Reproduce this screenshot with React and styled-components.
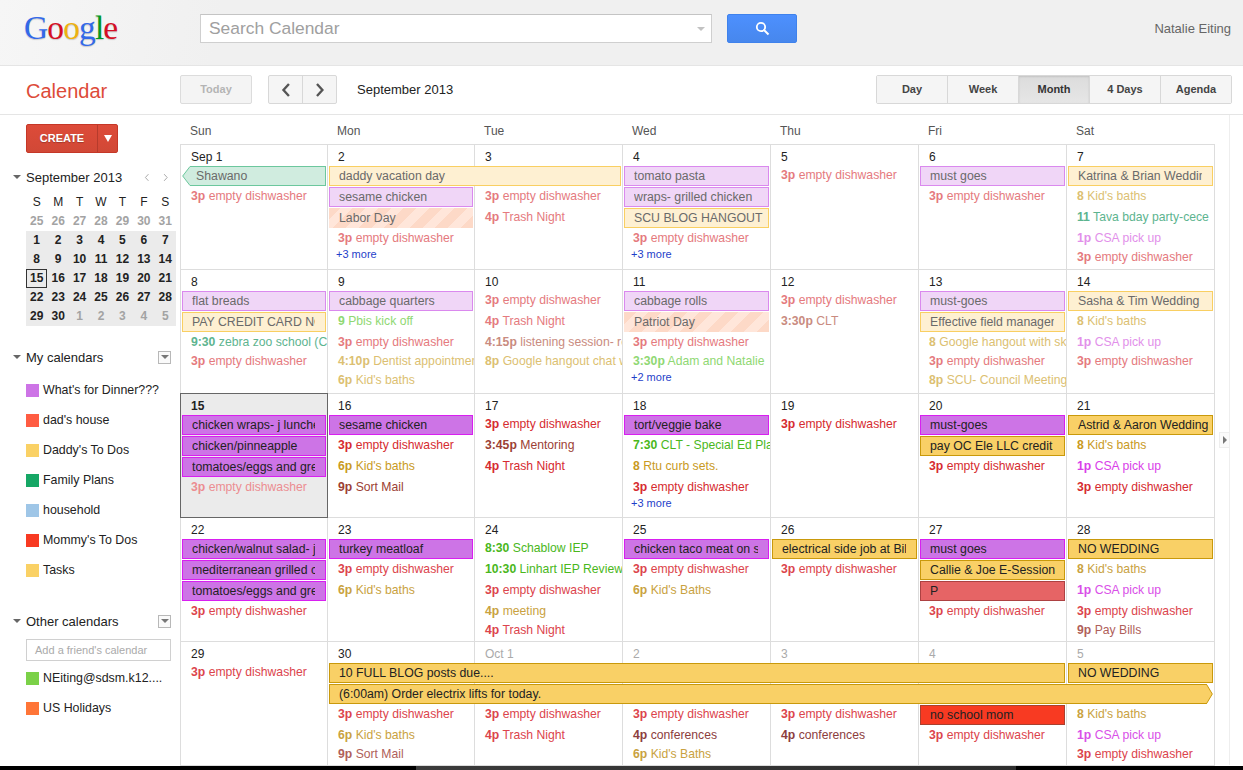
import React from 'react';
import styled, { createGlobalStyle, css } from 'styled-components';

const Global = createGlobalStyle`
  html, body { margin: 0; padding: 0; height: 770px; overflow: hidden; background: #fff; }
  body { font-family: "Liberation Sans", Arial, sans-serif; color: #222; }
  * { box-sizing: border-box; }
`;

const COLS = '147px 147px 148px 148px 148px 148px 148px';

const Page = styled.div`display: flex; flex-direction: column; width: 1243px; height: 770px; overflow: hidden;`;

const Header = styled.header`
  display: flex; align-items: flex-start; height: 66px; padding: 14px 12px 0 24px;
  background: linear-gradient(100deg, #f6f6f6 0, #f0f0f0 220px); border-bottom: 1px solid #e5e5e5; flex: none;
`;
const Logo = styled.div`
  width: 176px; margin-top: -5px; font-family: "Liberation Serif", serif; font-size: 33.5px; line-height: 38px; letter-spacing: -0.9px;
  text-shadow: 0 1px 1px rgba(0,0,0,.18);
`;
const L = styled.span`color: ${p => p.$c};`;
const SearchBox = styled.div`
  display: flex; align-items: center; justify-content: space-between; width: 512px; height: 29px; padding: 0 6px 0 8px;
  background: #fff; border: 1px solid #cfcfcf; border-top-color: #c4c4c4;
`;
const Placeholder = styled.span`font-size: 17.4px; color: #a0a0a0;`;
const Caret = styled.i`
  display: block; width: 0; height: 0; border-left: 4px solid transparent; border-right: 4px solid transparent;
  border-top: ${p => p.$h || 4}px solid ${p => p.$c || '#c2c2c2'};
`;
const SearchButton = styled.div`
  display: flex; align-items: center; justify-content: center; width: 70px; height: 29px; margin-left: 15px;
  background: linear-gradient(#4d90fe, #4787ed); border: 1px solid #3f82ec; border-radius: 2px;
`;
const UserName = styled.div`margin-left: auto; margin-top: 7px; font-size: 13px; color: #666;`;

const Toolbar = styled.div`
  display: flex; align-items: flex-start; height: 49px; padding-top: 9px; border-bottom: 1px solid #e5e5e5; flex: none;
`;
const AppTitle = styled.div`width: 180px; padding: 3px 0 0 26px; font-size: 20px; line-height: 26px; color: #dd4b39;`;
const TodayButton = styled.div`
  display: flex; align-items: center; justify-content: center; width: 72px; height: 29px; margin-right: 16px; padding-bottom: 2px;
  font-size: 11px; font-weight: bold; color: #b4b4b4; background: #f4f4f4; border: 1px solid #dcdcdc; border-radius: 2px;
`;
const NavGroup = styled.div`display: flex; width: 69px; height: 29px; border: 1px solid #d8d8d8; border-radius: 2px; background: #f5f5f5;`;
const NavButton = styled.div`
  flex: 1; display: flex; align-items: center; justify-content: center;
  & + & { border-left: 1px solid #d8d8d8; }
`;
const MonthLabel = styled.div`margin-left: 20px; font-size: 13px; line-height: 29px; color: #222;`;
const Tabs = styled.div`display: flex; width: 356px; height: 29px; margin-left: auto; margin-right: 11px; border: 1px solid #d8d8d8; border-radius: 2px;`;
const Tab = styled.div`
  flex: 1; display: flex; align-items: center; justify-content: center; padding-bottom: 2px; font-size: 11px; font-weight: bold; color: #444;
  background: #f5f5f5;
  & + & { border-left: 1px solid #d8d8d8; }
  ${p => p.$active && css`
    background: linear-gradient(#dcdcdc, #e6e6e6); color: #333; box-shadow: inset 0 1px 2px rgba(0,0,0,.12);
  `}
`;

const Body = styled.div`display: flex; flex: 1; min-height: 0;`;

const Sidebar = styled.aside`width: 180px; flex: none; padding: 9px 9px 0 0;`;
const CreateButton = styled.div`
  display: flex; width: 92px; height: 29px; margin-left: 26px; border: 1px solid #c53727; border-radius: 2px;
  background: linear-gradient(#dd4b39, #d14836); color: #fff; font-size: 11px; font-weight: bold;
`;
const CreateLabel = styled.span`flex: 1; text-align: center; line-height: 27px; text-shadow: 0 1px 1px rgba(0,0,0,.25);`;
const CreateCaret = styled.span`
  display: flex; align-items: center; justify-content: center; width: 20px; border-left: 1px solid #b63b2c;
`;
const SectionHead = styled.div`
  display: flex; align-items: center; height: 18px; margin-top: ${p => p.$top}px; font-size: 13px; color: #222;
`;
const Twisty = styled.span`display: flex; width: 26px; justify-content: flex-start; padding-left: 13px;`;
const Spacer = styled.span`flex: 1;`;
const Chevrons = styled.span`display: flex; gap: 14px; margin-right: 2px;`;
const MenuBox = styled.span`
  display: flex; align-items: center; justify-content: center; width: 13px; height: 13px; background: #fafafa; border: 1px solid #b8b8b8;
`;
const MiniGrid = styled.div`
  display: grid; grid-template-columns: repeat(7, 1fr); grid-auto-rows: 19px; width: 150px; margin: 7px 0 0 26px;
`;
const MiniCell = styled.div`
  text-align: center; font-size: 12px; line-height: 18px;
  font-weight: ${p => (p.$head ? 'normal' : 'bold')};
  color: ${p => (p.$dim ? '#a3a3a3' : '#222')};
  background: ${p => (p.$shaded ? '#ebebeb' : 'transparent')};
  ${p => p.$selected && css`border: 1px solid #333; line-height: 17px;`}
`;
const CalList = styled.ul`list-style: none; margin: ${p => p.$top}px 0 0; padding: 0 0 0 26px;`;
const CalItem = styled.li`display: flex; align-items: center; height: 30px; font-size: 12.4px; color: #222; white-space: nowrap;`;
const Swatch = styled.span`width: 13px; height: 13px; margin-right: 4px; flex: none; background: ${p => p.$c};`;
const FriendInput = styled.div`
  height: 22px; margin: 9px 0 0 26px; padding-left: 8px; font-size: 11px; line-height: 20px; color: #aaa;
  border: 1px solid #d0d0d0; background: #fff;
`;

const CalendarArea = styled.main`width: 1035px; flex: none;`;
const DayHead = styled.div`display: grid; grid-template-columns: ${COLS}; height: 29px;`;
const DayName = styled.div`padding: 9px 0 0 10px; font-size: 12px; line-height: 14px; color: #555;`;
const Weeks = styled.div`border-right: 1px solid #ddd; border-bottom: 1px solid #ddd;`;
const Week = styled.div`
  display: grid; grid-template-columns: ${COLS}; grid-template-rows: ${p => p.$rows}; height: ${p => p.$h}px;
`;
const DayCell = styled.div`
  grid-column: ${p => p.$col + 1}; grid-row: 1 / -1; padding: 5px 0 0 10px;
  border-left: 1px solid #ddd; border-top: 1px solid #ddd;
  ${p => p.$today && css`
    position: relative; z-index: 1; background: #ebebeb; border: 1px solid #666; margin: 0 -1px -1px 0;
  `}
`;
const DateNum = styled.div`
  font-size: 12px; line-height: 14px; font-weight: ${p => (p.$today ? 'bold' : 'normal')}; color: ${p => (p.$muted ? '#aaa' : '#222')};
`;
const chipSkins = {
  dinner: { bg: '#cd74e6', bd: '#d81ff0', fbg: '#f0d6f7', fbd: '#da89ee' },
  orange: { bg: '#f9d066', bd: '#c9990b', fbg: '#fef0d2', fbd: '#f9cf62' },
  mint: { bg: '#d0ecdf', bd: '#6cc79d', fbg: '#d0ecdf', fbd: '#6cc79d' },
  red: { bg: '#e66465', bd: '#ad4142', fbg: '#e66465', fbd: '#ad4142' },
  fire: { bg: '#f83a22', bd: '#a9402f', fbg: '#f83a22', fbd: '#a9402f' },
};
const Chip = styled.div`
  position: relative; z-index: 2; grid-column: ${p => p.$col + 1} / span ${p => p.$span};
  grid-row: ${p => p.$lane + 2}; height: 20px; margin: 0 1px 0 2px; padding: 0 ${p => (p.$fit ? 4 : 10)}px 0 9px; min-width: 0;
  font-size: 12.3px; line-height: 18px; color: ${p => (p.$faded ? '#6a6a6a' : '#222')};
  background: ${p => chipSkins[p.$kind]?.[p.$faded ? 'fbg' : 'bg']};
  border: 1px solid ${p => chipSkins[p.$kind]?.[p.$faded ? 'fbd' : 'bd']};
  ${p => p.$kind === 'holiday' && css`
    border: none; line-height: 20px; padding-left: 10px;
    background: repeating-linear-gradient(-45deg, #fdd9c7 0 9px, #ffe6da 9px 18px);
  `}
  ${p => p.$left && css`margin-left: 10px; border-left: none; padding-left: 6px;`}
  ${p => p.$right && css`margin-right: 7px; border-right: none;`}
`;
const ChipText = styled.span`display: block; overflow: hidden; white-space: nowrap;`;
const ChipTip = styled.svg`
  position: absolute; top: -1px; width: 8px; height: 20px; display: block;
  ${p => (p.$side === 'left' ? 'left: -8px;' : 'right: -7px;')}
`;
const EventRow = styled.div`
  position: relative; z-index: 2; grid-column: ${p => p.$col + 1}; grid-row: ${p => p.$lane + 2}; min-width: 0;
  padding-left: 11px; overflow: hidden; white-space: nowrap; font-size: 12.2px; line-height: 19px; height: 19px;
  color: ${p => p.$c};
`;
const MoreLink = styled.div`
  position: relative; z-index: 2; grid-column: ${p => p.$col + 1}; grid-row: ${p => p.$lane + 2};
  padding-left: 9px; font-size: 11px; line-height: 12px; color: #1f3fc9;
`;
const Gutter = styled.div`
  display: flex; flex-direction: column; align-items: flex-end; width: 15px; padding-top: 317px; border-right: 1px solid #eee;
  height: 650px;
`;
const ExpandTab = styled.div`
  display: flex; align-items: center; justify-content: center; width: 10px; height: 16px; background: #fafafa;
  border: 1px solid #eee; border-right: none;
`;
const ExpandCaret = styled.i`
  display: block; width: 0; height: 0; border-top: 4px solid transparent; border-bottom: 4px solid transparent; border-left: 4px solid #777;
`;
const Footer = styled.div`
  height: 4px; flex: none; background: linear-gradient(90deg, #000 0 416px, #3b3b3b 416px, #2e2e2e 1016px, #000 1016px);
`;

const tones = {
  red: { past: '#e57a7e', now: '#d62b30', soon: '#dc444c', today: '#ec8d91' },
  gold: { past: '#dcbf72', now: '#c99a1e', soon: '#c9a23f' },
  brown: { past: '#c98b80', now: '#9c3f35', soon: '#b05f5b' },
  dark: { soon: '#8c3d3d' },
  green: { past: '#8fd873', now: '#4ab71c', soon: '#4ab71c' },
  teal: { past: '#5db48f' },
  pink: { past: '#e290ea', now: '#d93ee9', soon: '#d94fe8' },
};
const chip = (col, lane, kind, title, o = {}) => ({ type: 'chip', col, lane, kind, title, span: 1, ...o });
const ev = (col, lane, tone, time, title) => ({ type: 'ev', col, lane, tone, time, title });
const more = (col, lane, title) => ({ type: 'more', col, lane, title });
const dish = (col, lane) => ev(col, lane, 'red', '3p', 'empty dishwasher');
const baths = (col, lane, day = "Kid's baths", time = '6p') => ev(col, lane, 'gold', time, day);
const csa = (col, lane) => ev(col, lane, 'pink', '1p', 'CSA pick up');
const trash = (col, lane) => ev(col, lane, 'red', '4p', 'Trash Night');

const R3 = '22px 21px 21px 21px 19px 19px 1fr';
const R2 = '22px 21px 21px 19px 19px 19px 1fr';

const weeks = [
  {
    h: 125, rows: R3, tone: 'past', faded: true,
    dates: ['Sep 1', '2', '3', '4', '5', '6', '7'],
    items: [
      chip(0, 0, 'mint', 'Shawano', { left: true }), dish(0, 1),
      chip(1, 0, 'orange', 'daddy vacation day', { span: 2 }), chip(1, 1, 'dinner', 'sesame chicken'),
      chip(1, 2, 'holiday', 'Labor Day'), dish(1, 3), more(1, 4, '+3 more'),
      dish(2, 1), trash(2, 2),
      chip(3, 0, 'dinner', 'tomato pasta'), chip(3, 1, 'dinner', 'wraps- grilled chicken'),
      chip(3, 2, 'orange', 'SCU BLOG HANGOUT', { fit: true }), dish(3, 3), more(3, 4, '+3 more'),
      dish(4, 0),
      chip(5, 0, 'dinner', 'must goes'), dish(5, 1),
      chip(6, 0, 'orange', 'Katrina & Brian Wedding'), baths(6, 1, "Kid's baths", '8'),
      ev(6, 2, 'teal', '11', 'Tava bday party-cece'), csa(6, 3), dish(6, 4),
    ],
  },
  {
    h: 124, rows: R2, tone: 'past', faded: true,
    dates: ['8', '9', '10', '11', '12', '13', '14'],
    items: [
      chip(0, 0, 'dinner', 'flat breads'), chip(0, 1, 'orange', 'PAY CREDIT CARD NOW'),
      ev(0, 2, 'teal', '9:30', 'zebra zoo school (CLT)'), dish(0, 3),
      chip(1, 0, 'dinner', 'cabbage quarters'), ev(1, 1, 'green', '9', 'Pbis kick off'), dish(1, 2),
      baths(1, 3, 'Dentist appointment', '4:10p'), baths(1, 4),
      dish(2, 0), trash(2, 1), ev(2, 2, 'brown', '4:15p', 'listening session- room'),
      baths(2, 3, 'Google hangout chat with', '8p'),
      chip(3, 0, 'dinner', 'cabbage rolls'), chip(3, 1, 'holiday', 'Patriot Day'), dish(3, 2),
      ev(3, 3, 'green', '3:30p', 'Adam and Natalie'), more(3, 4, '+2 more'),
      dish(4, 0), ev(4, 1, 'brown', '3:30p', 'CLT'),
      chip(5, 0, 'dinner', 'must-goes'), chip(5, 1, 'orange', 'Effective field management'),
      baths(5, 2, 'Google hangout with sk', '8'), dish(5, 3), baths(5, 4, 'SCU- Council Meeting', '8p'),
      chip(6, 0, 'orange', 'Sasha & Tim Wedding', { fit: true }), baths(6, 1, "Kid's baths", '8'), csa(6, 2), dish(6, 3),
    ],
  },
  {
    h: 124, rows: R3, tone: 'now', today: 0,
    dates: ['15', '16', '17', '18', '19', '20', '21'],
    items: [
      chip(0, 0, 'dinner', 'chicken wraps- j lunches'), chip(0, 1, 'dinner', 'chicken/pinneapple'),
      chip(0, 2, 'dinner', 'tomatoes/eggs and greens'), { ...dish(0, 3), forced: 'today' },
      chip(1, 0, 'dinner', 'sesame chicken'), dish(1, 1), baths(1, 2), ev(1, 3, 'brown', '9p', 'Sort Mail'),
      dish(2, 0), ev(2, 1, 'brown', '3:45p', 'Mentoring'), trash(2, 2),
      chip(3, 0, 'dinner', 'tort/veggie bake'), ev(3, 1, 'green', '7:30', 'CLT - Special Ed Plan'),
      baths(3, 2, 'Rtu curb sets.', '8'), dish(3, 3), more(3, 4, '+3 more'),
      dish(4, 0),
      chip(5, 0, 'dinner', 'must-goes'), chip(5, 1, 'orange', 'pay OC Ele LLC credit card'), dish(5, 2),
      chip(6, 0, 'orange', 'Astrid & Aaron Wedding', { fit: true }), baths(6, 1, "Kid's baths", '8'), csa(6, 2), dish(6, 3),
    ],
  },
  {
    h: 124, rows: R3, tone: 'soon',
    dates: ['22', '23', '24', '25', '26', '27', '28'],
    items: [
      chip(0, 0, 'dinner', 'chicken/walnut salad- j lunch'), chip(0, 1, 'dinner', 'mediterranean grilled chicken'),
      chip(0, 2, 'dinner', 'tomatoes/eggs and greens'), dish(0, 3),
      chip(1, 0, 'dinner', 'turkey meatloaf'), dish(1, 1), baths(1, 2),
      ev(2, 0, 'green', '8:30', 'Schablow IEP'), ev(2, 1, 'green', '10:30', 'Linhart IEP Review'), dish(2, 2),
      baths(2, 3, 'meeting', '4p'), trash(2, 4),
      chip(3, 0, 'dinner', 'chicken taco meat on salad'), dish(3, 1), baths(3, 2, "Kid's Baths"),
      chip(4, 0, 'orange', "electrical side job at Bill's"), dish(4, 1),
      chip(5, 0, 'dinner', 'must goes'), chip(5, 1, 'orange', 'Callie & Joe E-Session', { fit: true }), chip(5, 2, 'red', 'P'), dish(5, 3),
      chip(6, 0, 'orange', 'NO WEDDING'), baths(6, 1, "Kid's baths", '8'), csa(6, 2), dish(6, 3),
      ev(6, 4, 'brown', '9p', 'Pay Bills'),
    ],
  },
  {
    h: 124, rows: R3, tone: 'soon', muted: [2, 3, 4, 5, 6],
    dates: ['29', '30', 'Oct 1', '2', '3', '4', '5'],
    items: [
      dish(0, 0),
      chip(1, 0, 'orange', '10 FULL BLOG posts due....', { span: 5 }),
      chip(1, 1, 'orange', '(6:00am) Order electrix lifts for today.', { span: 6, right: true }),
      dish(1, 2), baths(1, 3), ev(1, 4, 'brown', '9p', 'Sort Mail'),
      dish(2, 2), trash(2, 3),
      dish(3, 2), ev(3, 3, 'dark', '4p', 'conferences'), baths(3, 4, "Kid's Baths"),
      dish(4, 2), ev(4, 3, 'dark', '4p', 'conferences'),
      chip(5, 2, 'fire', 'no school mom'), dish(5, 3),
      chip(6, 0, 'orange', 'NO WEDDING'), baths(6, 2, "Kid's baths", '8'), csa(6, 3), dish(6, 4),
    ],
  },
];

const miniRows = [
  [25, 26, 27, 28, 29, 30, 31], [1, 2, 3, 4, 5, 6, 7], [8, 9, 10, 11, 12, 13, 14], [15, 16, 17, 18, 19, 20, 21],
  [22, 23, 24, 25, 26, 27, 28], [29, 30, 1, 2, 3, 4, 5],
];
const myCals = [
  ["What's for Dinner???", '#cd74e6'], ["dad's house", '#ff5c42'], ["Daddy's To Dos", '#fad165'], ['Family Plans', '#16a765'],
  ['household', '#9fc6e7'], ["Mommy's To Dos", '#f83a22'], ['Tasks', '#fad165'],
];
const otherCals = [['NEiting@sdsm.k12....', '#7bd148'], ['US Holidays', '#ff7537']];

const Chevron = ({ dir, size = 16, w = 2.4, c = '#555' }) => (
  <svg width={size * 0.62} height={size} viewBox="0 0 10 16" fill="none">
    <path d={dir === 'left' ? 'M8 2 L2.5 8 L8 14' : 'M2 2 L7.5 8 L2 14'} stroke={c} strokeWidth={w} />
  </svg>
);

const Tip = ({ side, kind }) => {
  const skin = chipSkins[kind];
  const faded = side === 'left';
  const bg = faded ? skin.fbg : skin.bg;
  const bd = faded ? skin.fbd : skin.bd;
  const points = side === 'left' ? '8,0.5 0.7,10 8,19.5' : '0,0.5 0.6,0.5 6.3,10 0.6,19.5 0,19.5';
  return (
    <ChipTip $side={side} viewBox="0 0 8 20">
      <polygon points={points} fill={bg} />
      <polyline points={points} fill="none" stroke={bd} />
    </ChipTip>
  );
};

const SectionTitle = ({ top, children, extra }) => (
  <SectionHead $top={top}>
    <Twisty><Caret $c="#666" /></Twisty>
    {children}
    <Spacer />
    {extra}
  </SectionHead>
);

const Menu = () => <MenuBox><Caret $c="#777" $h={4} /></MenuBox>;

export default function App() {
  return (
    <Page>
      <Global />
      <Header>
        <Logo>
          <L $c="#3369e8">G</L><L $c="#d50f25">o</L><L $c="#eeb211">o</L><L $c="#3369e8">g</L><L $c="#009925">l</L><L $c="#d50f25">e</L>
        </Logo>
        <SearchBox>
          <Placeholder>Search Calendar</Placeholder>
          <Caret />
        </SearchBox>
        <SearchButton>
          <svg width="15" height="15" viewBox="0 0 15 15" fill="none">
            <circle cx="6" cy="6" r="4.2" stroke="#fff" strokeWidth="1.8" />
            <path d="M9 9 L13.5 13.5" stroke="#fff" strokeWidth="2" />
          </svg>
        </SearchButton>
        <UserName>Natalie Eiting</UserName>
      </Header>
      <Toolbar>
        <AppTitle>Calendar</AppTitle>
        <TodayButton>Today</TodayButton>
        <NavGroup>
          <NavButton><Chevron dir="left" /></NavButton>
          <NavButton><Chevron dir="right" /></NavButton>
        </NavGroup>
        <MonthLabel>September 2013</MonthLabel>
        <Tabs>
          {['Day', 'Week', 'Month', '4 Days', 'Agenda'].map(t => <Tab key={t} $active={t === 'Month'}>{t}</Tab>)}
        </Tabs>
      </Toolbar>
      <Body>
        <Sidebar>
          <CreateButton>
            <CreateLabel>CREATE</CreateLabel>
            <CreateCaret><Caret $c="#fff" $h={7} /></CreateCaret>
          </CreateButton>
          <SectionTitle
            top={15}
            extra={<Chevrons><Chevron dir="left" size={9} w={1.5} c="#999" /><Chevron dir="right" size={9} w={1.5} c="#999" /></Chevrons>}
          >
            September 2013
          </SectionTitle>
          <MiniGrid>
            {['S', 'M', 'T', 'W', 'T', 'F', 'S'].map((d, i) => <MiniCell key={i} $head>{d}</MiniCell>)}
            {miniRows.map((row, r) => row.map((n, c) => (
              <MiniCell
                key={`${r}-${c}`}
                $shaded={r > 0}
                $dim={r === 0 || (r === 5 && c > 1)}
                $selected={r === 3 && c === 0}
              >
                {n}
              </MiniCell>
            )))}
          </MiniGrid>
          <SectionTitle top={22} extra={<Menu />}>My calendars</SectionTitle>
          <CalList $top={9}>
            {myCals.map(([name, c]) => <CalItem key={name}><Swatch $c={c} />{name}</CalItem>)}
          </CalList>
          <SectionTitle top={27} extra={<Menu />}>Other calendars</SectionTitle>
          <FriendInput>Add a friend's calendar</FriendInput>
          <CalList $top={2}>
            {otherCals.map(([name, c]) => <CalItem key={name}><Swatch $c={c} />{name}</CalItem>)}
          </CalList>
        </Sidebar>
        <CalendarArea>
          <DayHead>
            {['Sun', 'Mon', 'Tue', 'Wed', 'Thu', 'Fri', 'Sat'].map(d => <DayName key={d}>{d}</DayName>)}
          </DayHead>
          <Weeks>
            {weeks.map((w, wi) => (
              <Week key={wi} $rows={w.rows} $h={w.h}>
                {w.dates.map((d, i) => (
                  <DayCell key={d} $col={i} $today={w.today === i}>
                    <DateNum $today={w.today === i} $muted={w.muted?.includes(i)}>{d}</DateNum>
                  </DayCell>
                ))}
                {w.items.map((it, i) => {
                  if (it.type === 'chip') {
                    return (
                      <Chip key={i} $col={it.col} $lane={it.lane} $span={it.span} $kind={it.kind} $faded={w.faded} $left={it.left} $right={it.right} $fit={it.fit}>
                        {it.left && <Tip side="left" kind={it.kind} />}
                        <ChipText>{it.title}</ChipText>
                        {it.right && <Tip side="right" kind={it.kind} />}
                      </Chip>
                    );
                  }
                  if (it.type === 'more') return <MoreLink key={i} $col={it.col} $lane={it.lane}>{it.title}</MoreLink>;
                  return (
                    <EventRow key={i} $col={it.col} $lane={it.lane} $c={tones[it.tone][it.forced || w.tone]}>
                      <b>{it.time}</b> {it.title}
                    </EventRow>
                  );
                })}
              </Week>
            ))}
          </Weeks>
        </CalendarArea>
        <Gutter>
          <ExpandTab><ExpandCaret /></ExpandTab>
        </Gutter>
      </Body>
      <Footer />
    </Page>
  );
}
